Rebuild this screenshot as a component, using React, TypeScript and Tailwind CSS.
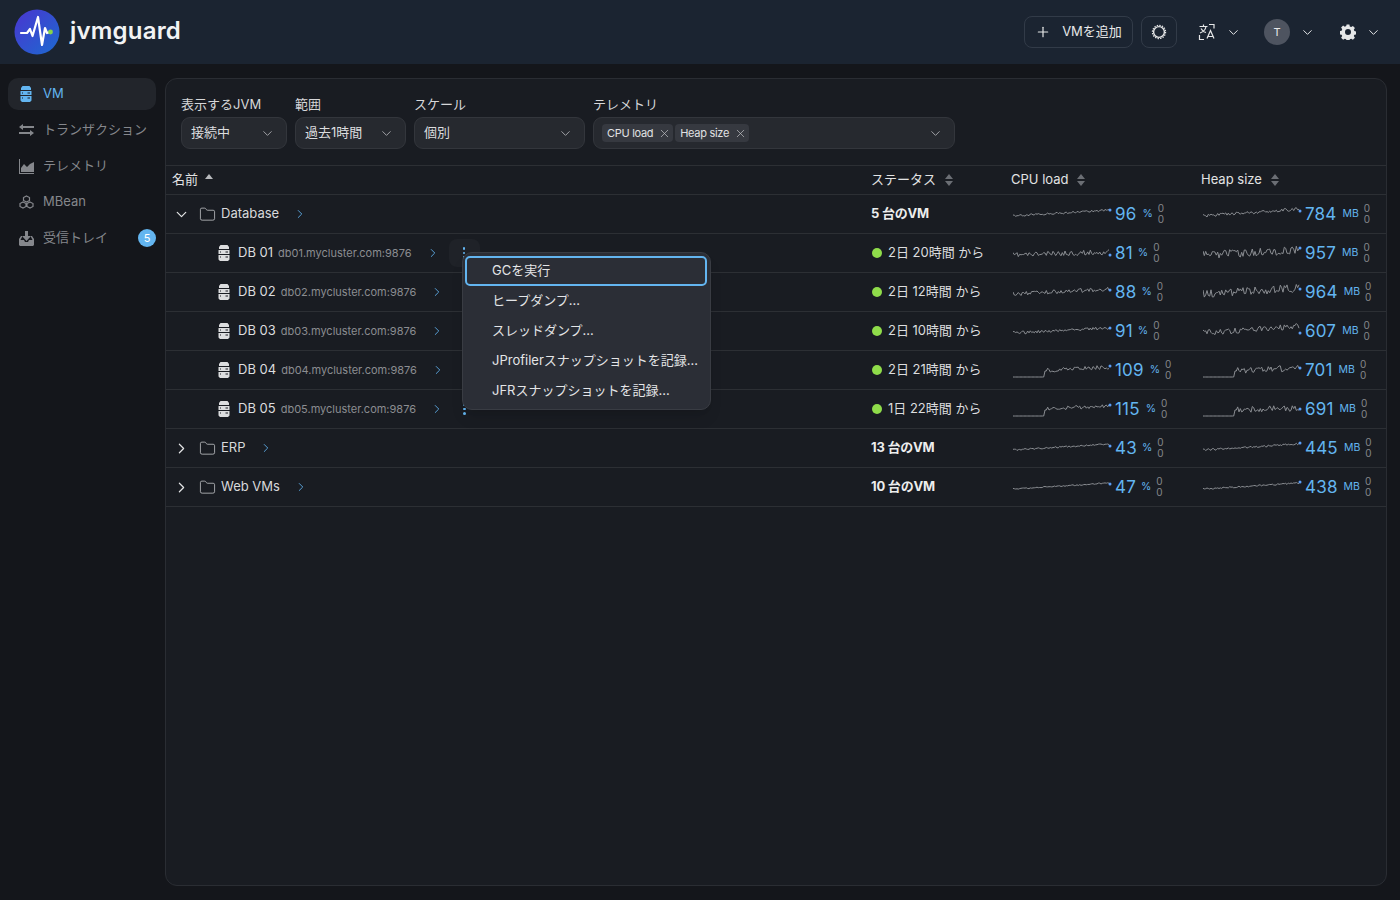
import { ChevronDown, ChevronRight, Plus, X, Folder } from "lucide-react";

const font = { fontFamily: "Inter, 'Noto Sans CJK JP', sans-serif" };

// deterministic noise so the sparklines stay the same between renders
function series(seed: number, rise: number, noise: number, step: boolean) {
  let s = seed;
  const rnd = () => {
    s = (s * 16807) % 2147483647;
    return s / 2147483647;
  };
  const pts: string[] = [];
  for (let i = 0; i <= 72; i++) {
    const x = (i / 72) * 96;
    let y: number;
    if (step && i < 24) {
      y = 15;
    } else if (step && i < 26) {
      y = 9;
    } else {
      y = 10 - (rise * i) / 72 + (rnd() - 0.5) * noise;
    }
    pts.push(`${x.toFixed(1)},${Math.max(0.5, Math.min(15, y)).toFixed(1)}`);
  }
  return pts.join(" ");
}

function Spark({ seed, rise, noise, step, dotY }: { seed: number; rise: number; noise: number; step?: boolean; dotY: number }) {
  return (
    <svg width="100" height="16" viewBox="0 0 100 16" className="shrink-0">
      <polyline points={series(seed, rise, noise, !!step)} fill="none" stroke="#8a8d92" strokeWidth="1" />
      <circle cx="97" cy={dotY} r="1.5" fill="#5b9cf5" />
    </svg>
  );
}

function SortIcon() {
  return (
    <svg width="10" height="14" viewBox="0 0 10 14" className="ml-2 shrink-0" fill="#6b6e74">
      <path d="M5 1l4 5H1zM5 13L1 8h8z" />
    </svg>
  );
}

function ServerIcon({ className }: { className?: string }) {
  return (
    <svg width="12" height="16" viewBox="0 0 12 16" className={className} fill="currentColor">
      <path d="M2.5 0h7L11 2v2H1V2zM.5 5h11v4H.5zM.5 10h11v4.5L10 16H2L.5 14.5z" />
      <rect x="7.5" y="6.5" width="2.5" height="1" fill="#1a1d24" />
      <rect x="7.5" y="11.5" width="2.5" height="1" fill="#1a1d24" />
      <rect x="2" y="6.5" width="1" height="1" fill="#1a1d24" />
      <rect x="2" y="11.5" width="1" height="1" fill="#1a1d24" />
    </svg>
  );
}

function Logo() {
  return (
    <svg width="46" height="46" viewBox="0 0 46 46" className="shrink-0">
      <defs>
        <linearGradient id="lg" x1="0" y1="0" x2="1" y2="1">
          <stop offset="0" stopColor="#4a35d0" />
          <stop offset="1" stopColor="#1c6ad0" />
        </linearGradient>
      </defs>
      <circle cx="23" cy="23" r="22.5" fill="url(#lg)" />
      <polyline
        points="7,24 13,24 16,20 18.5,27 24,8 28,36 31,19 33,24 36,23"
        fill="none"
        stroke="white"
        strokeWidth="2.2"
        strokeLinejoin="round"
        strokeLinecap="round"
      />
      <circle cx="36.5" cy="23" r="2.4" fill="#86d44a" />
    </svg>
  );
}

function Select({ label, value, width }: { label: string; value: string; width: string }) {
  return (
    <div className={width}>
      <div className="text-[13px] leading-[16px] text-[#d6d7d9] mb-[5px]">{label}</div>
      <div className="h-[32px] flex items-center justify-between pl-[9px] pr-[11px] rounded-[9px] bg-[#26292f] border border-[#33363c] text-[13px] text-[#dcdddf]">
        <span>{value}</span>
        <ChevronDown size={15} strokeWidth={1.5} className="text-[#a6a8ac]" />
      </div>
    </div>
  );
}

function Chip({ text }: { text: string }) {
  return (
    <span className="h-[18px] flex items-center gap-[5px] pl-[5px] pr-[2px] rounded-[4px] bg-[#363940] text-[11px] tracking-[-0.3px] text-[#e0e1e3]">
      {text}
      <X size={13} strokeWidth={1.3} className="text-[#c0c2c5]" />
    </span>
  );
}

type Metric = { v: string; seed: number; rise: number; noise: number; step?: boolean; dotY: number; gap: string };

function MetricCell({ m, unit }: { m: Metric; unit: string }) {
  return (
    <div className="flex items-center pl-[2px] h-full">
      <Spark seed={m.seed} rise={m.rise} noise={m.noise} step={m.step} dotY={m.dotY} />
      <span className="text-[17px] leading-[20px] ml-[2px] text-[#63b5f0] tracking-[0.2px]">{m.v}</span>
      <span className={`text-[10.5px] text-[#63b5f0] ${m.gap}`}>{unit}</span>
      <span className="flex flex-col text-[10px] leading-[11px] text-[#85878b] ml-[5px] items-center">
        <span>0</span>
        <span>0</span>
      </span>
    </div>
  );
}

const cols = "grid grid-cols-[705px_140px_190px_1fr] border-b border-[#2c2f34]";

const vms = [
  { n: "DB 01", h: "db01.mycluster.com:9876", up: "2日 20時間 から", kebab: true,
    c: { v: "81", seed: 11, rise: 3, noise: 5, dotY: 10, gap: "ml-[5px]" }, m: { v: "957", seed: 12, rise: 5, noise: 8, dotY: 3, gap: "ml-[6px]" } },
  { n: "DB 02", h: "db02.mycluster.com:9876", up: "2日 12時間 から",
    c: { v: "88", seed: 21, rise: 5, noise: 4, dotY: 6, gap: "ml-[5px]" }, m: { v: "964", seed: 22, rise: 6, noise: 8, dotY: 5, gap: "ml-[6px]" } },
  { n: "DB 03", h: "db03.mycluster.com:9876", up: "2日 10時間 から",
    c: { v: "91", seed: 31, rise: 5, noise: 3, dotY: 5, gap: "ml-[5px]" }, m: { v: "607", seed: 32, rise: 7, noise: 6, dotY: 10, gap: "ml-[6px]" } },
  { n: "DB 04", h: "db04.mycluster.com:9876", up: "2日 21時間 から",
    c: { v: "109", seed: 41, rise: 5, noise: 4, step: true, dotY: 4, gap: "ml-[6px]" }, m: { v: "701", seed: 42, rise: 4, noise: 6, step: true, dotY: 6, gap: "ml-[6px]" } },
  { n: "DB 05", h: "db05.mycluster.com:9876", up: "1日 22時間 から",
    c: { v: "115", seed: 51, rise: 5, noise: 4, step: true, dotY: 4, gap: "ml-[6px]" }, m: { v: "691", seed: 52, rise: 3, noise: 6, step: true, dotY: 8, gap: "ml-[6px]" } },
];

const groups = {
  db: { c: { v: "96", seed: 1, rise: 6, noise: 2, dotY: 4, gap: "ml-[6px]" }, m: { v: "784", seed: 2, rise: 7, noise: 3, dotY: 5, gap: "ml-[6px]" } },
  erp: { c: { v: "43", seed: 61, rise: 6, noise: 1.5, dotY: 6, gap: "ml-[5px]" }, m: { v: "445", seed: 62, rise: 6, noise: 2, dotY: 3, gap: "ml-[6px]" } },
  web: { c: { v: "47", seed: 71, rise: 6, noise: 1.2, dotY: 5, gap: "ml-[5px]" }, m: { v: "438", seed: 72, rise: 6, noise: 1.5, dotY: 3, gap: "ml-[6px]" } },
};

function GroupRow({ name, open, count, data }: { name: string; open?: boolean; count: string; data: { c: Metric; m: Metric } }) {
  return (
    <div className={`${cols} h-[39px]`}>
      <div className="flex items-center pl-[7px] text-[13px] text-[#d8d9db]">
        {open ? <ChevronDown size={17} strokeWidth={1.7} className="text-[#e4e5e6]" /> : <ChevronRight size={17} strokeWidth={1.7} className="text-[#e4e5e6]" />}
        <Folder size={17} strokeWidth={1} className="ml-[9px] text-[#d8d9db]" />
        <span className="ml-[5px]">{name}</span>
        <ChevronRight size={14} strokeWidth={1.6} className="ml-[14px] text-[#5ba7e0]" />
      </div>
      <div className="flex items-center text-[13px] font-bold text-[#eceded] tracking-[-0.2px]">{count}</div>
      <MetricCell m={data.c} unit="%" />
      <MetricCell m={data.m} unit="MB" />
    </div>
  );
}

export default function App() {
  return (
    <div className="w-[1400px] h-[900px] overflow-hidden flex flex-col bg-[#14161b] relative" style={font}>
      <header className="h-[64px] shrink-0 bg-[#1b2431] flex items-center pl-[14px] pr-[19px]">
        <Logo />
        <span className="ml-[10px] text-[24px] font-semibold tracking-[0.2px] text-[#f2f3f4] leading-none pb-[3px]">jvmguard</span>
        <div className="ml-auto flex items-center text-[#e6e7e8]">
          <button className="h-[32px] w-[109px] flex items-center justify-center gap-[11px] rounded-[8px] border border-[#323b48] text-[13px]">
            <Plus size={16} strokeWidth={1.8} />
            VMを追加
          </button>
          <button className="h-[32px] w-[36px] ml-[8px] flex items-center justify-center rounded-[8px] border border-[#323b48]">
            <svg width="16" height="16" viewBox="0 0 16 16" fill="none" stroke="currentColor">
              <circle cx="8" cy="8" r="5.4" strokeWidth="1.4" />
              <circle cx="8" cy="8" r="6.6" strokeWidth="1.2" strokeDasharray="1.4 1.2" />
            </svg>
          </button>
          <svg width="18" height="18" viewBox="0 0 18 18" className="ml-[21px]" fill="none" stroke="currentColor" strokeWidth="1.2">
            <path d="M1.5 3.5h8M5.5 1.5v2M8 3.5c-.5 3-3 5.5-6 6.5M3 5.5c1 2 3 3.5 5 4" />
            <path d="M9 15.5l3.5-8 3.5 8M10 13.5h5" />
            <path d="M11 1.5h5v4M1.5 12v4.5H6" />
          </svg>
          <ChevronDown size={15} strokeWidth={1.6} className="ml-[10px]" />
          <span className="ml-[23px] w-[26px] h-[26px] rounded-full bg-[#4e5460] flex items-center justify-center text-[11px] text-[#e8e9ea]">T</span>
          <ChevronDown size={15} strokeWidth={1.6} className="ml-[10px]" />
          <svg width="16" height="16" viewBox="0 0 16 16" className="ml-[25px]" fill="currentColor">
            <path
              fillRule="evenodd"
              d="M6.6.5h2.8l.4 2 1.4.6 1.7-1.1 2 2-1.1 1.7.6 1.4 2 .4v2.8l-2 .4-.6 1.4 1.1 1.7-2 2-1.7-1.1-1.4.6-.4 2H6.6l-.4-2-1.4-.6-1.7 1.1-2-2 1.1-1.7-.6-1.4-2-.4V7.1l2-.4.6-1.4L1.1 3.6l2-2 1.7 1.1 1.4-.6zM8 5a3 3 0 100 6 3 3 0 000-6z"
            />
          </svg>
          <ChevronDown size={15} strokeWidth={1.6} className="ml-[10px]" />
        </div>
      </header>

      <div className="flex-1 flex min-h-0">
        <nav className="w-[165px] shrink-0 pt-[14px] pl-[8px] pr-[9px] text-[13px] text-[#85878c]">
          <div className="h-[32px] flex items-center rounded-[10px] bg-[#22252b] pl-[12px] text-[#63b5f0]">
            <ServerIcon />
            <span className="ml-[11px]">VM</span>
          </div>
          <div className="h-[36px] mt-[2px] flex items-center pl-[11px]">
            <svg width="15" height="12" viewBox="0 0 15 12" fill="currentColor">
              <path d="M4 0v2h11v2H4v2L0 3zM11 6v2H0v2h11v2l4-3z" />
            </svg>
            <span className="ml-[9px] whitespace-nowrap">トランザクション</span>
          </div>
          <div className="h-[36px] flex items-center pl-[11px]">
            <svg width="15" height="15" viewBox="0 0 15 15" fill="currentColor">
              <path d="M0 0h1v14h14v1H0zM2 13V9l3-4 3 3 3-3 4-2v10z" />
            </svg>
            <span className="ml-[9px]">テレメトリ</span>
          </div>
          <div className="h-[36px] flex items-center pl-[11px]">
            <svg width="15" height="14" viewBox="0 0 15 14" fill="none" stroke="currentColor" strokeWidth="1.2">
              <path d="M7.5 1l3 1.5v3L7.5 7l-3-1.5v-3zM4 7l3 1.5v3L4 13l-3-1.5v-3zM11 7l3 1.5v3L11 13l-3-1.5v-3z" />
            </svg>
            <span className="ml-[9px]">MBean</span>
          </div>
          <div className="h-[36px] flex items-center pl-[11px] pr-[-1px]">
            <svg width="15" height="15" viewBox="0 0 15 15" fill="currentColor">
              <path d="M6 0h3v5h3L7.5 10 3 5h3zM0 8l2-3h1v1L1.5 9H5l1 2h3l1-2h3.5L12 6V5h1l2 3v6l-1 1H1l-1-1z" />
            </svg>
            <span className="ml-[9px]">受信トレイ</span>
            <span className="ml-auto w-[18px] h-[18px] rounded-full bg-[#63b5f0] text-white text-[11px] flex items-center justify-center">5</span>
          </div>
        </nav>

        <main className="w-[1222px] h-[808px] mt-[14px] rounded-[12px] border border-[#2a2d33] bg-[#191c22] flex flex-col">
          <div className="flex items-start gap-[8px] pt-[17px] pl-[15px] h-[86px] shrink-0">
            <Select label="表示するJVM" value="接続中" width="w-[106px]" />
            <Select label="範囲" value="過去1時間" width="w-[111px]" />
            <Select label="スケール" value="個別" width="w-[171px]" />
            <div className="w-[362px]">
              <div className="text-[13px] leading-[16px] text-[#d6d7d9] mb-[5px]">テレメトリ</div>
              <div className="h-[32px] flex items-center gap-[2px] pl-[8px] pr-[11px] rounded-[9px] bg-[#26292f] border border-[#33363c]">
                <Chip text="CPU load" />
                <Chip text="Heap size" />
                <ChevronDown size={15} strokeWidth={1.5} className="ml-auto text-[#a6a8ac]" />
              </div>
            </div>
          </div>

          <div className="text-[13px] border-t border-[#2c2f34] relative">
            <div className={`${cols} h-[29px] text-[#e2e3e4]`}>
              <div className="flex items-center pl-[6px]">
                名前
                <svg width="10" height="6" viewBox="0 0 10 6" className="ml-[6px] mb-[6px]" fill="#b8babd">
                  <path d="M5 0l4 5H1z" />
                </svg>
              </div>
              <div className="flex items-center">
                ステータス
                <SortIcon />
              </div>
              <div className="flex items-center">
                CPU load
                <SortIcon />
              </div>
              <div className="flex items-center">
                Heap size
                <SortIcon />
              </div>
            </div>

            <GroupRow name="Database" open count="5 台のVM" data={groups.db} />

            {vms.map((vm, i) => (
              <div key={vm.n} className={`${cols} h-[39px]`}>
                <div className="flex items-center pl-[52px]">
                  <ServerIcon className="text-[#dcdddf]" />
                  <span className="ml-[8px] text-[13px] text-[#dcdddf] whitespace-nowrap">{vm.n}</span>
                  <span className="ml-[5px] text-[11px] text-[#8b8d91] whitespace-nowrap">{vm.h}</span>
                  <ChevronRight size={14} strokeWidth={1.6} className="ml-[14px] text-[#5ba7e0]" />
                  {vm.kebab && (
                    <span className="ml-[9px] w-[31px] h-[28px] rounded-[8px] bg-[#1f2228] flex flex-col items-center justify-center gap-[2px]">
                      <i className="block w-[2.5px] h-[2.5px] rounded-full bg-[#63b5f0]" />
                      <i className="block w-[2.5px] h-[2.5px] rounded-full bg-[#63b5f0]" />
                      <i className="block w-[2.5px] h-[2.5px] rounded-full bg-[#63b5f0]" />
                    </span>
                  )}
                  {i === 4 && (
                    <span className="ml-[19px] flex flex-col items-center gap-[2px]">
                      <i className="block w-[2.5px] h-[2.5px] rounded-full bg-[#63b5f0]" />
                      <i className="block w-[2.5px] h-[2.5px] rounded-full bg-[#63b5f0]" />
                      <i className="block w-[2.5px] h-[2.5px] rounded-full bg-[#63b5f0]" />
                    </span>
                  )}
                </div>
                <div className="flex items-center text-[#dcdddf]">
                  <span className="w-[10px] h-[10px] rounded-full bg-[#8fdc4a] ml-[1px] mr-[6px]" />
                  {vm.up}
                </div>
                <MetricCell m={vm.c} unit="%" />
                <MetricCell m={vm.m} unit="MB" />
              </div>
            ))}

            <GroupRow name="ERP" count="13 台のVM" data={groups.erp} />
            <GroupRow name="Web VMs" count="10 台のVM" data={groups.web} />

            <div className="absolute left-[296px] top-[86px] w-[249px] h-[158px] rounded-[10px] bg-[#2b2e36] border border-[#393c43] p-[3px] text-[13px] text-[#e4e5e7] shadow-lg">
              <div className="h-[30px] flex items-center pl-[25px] rounded-[5px] border-2 border-[#63b5f0] w-[242px] -ml-[1px]">GCを実行</div>
              <div className="h-[30px] flex items-center pl-[26px]">ヒープダンプ...</div>
              <div className="h-[30px] flex items-center pl-[26px]">スレッドダンプ...</div>
              <div className="h-[30px] flex items-center pl-[26px] whitespace-nowrap">JProfilerスナップショットを記録...</div>
              <div className="h-[30px] flex items-center pl-[26px]">JFRスナップショットを記録...</div>
            </div>
          </div>
        </main>
      </div>
    </div>
  );
}
